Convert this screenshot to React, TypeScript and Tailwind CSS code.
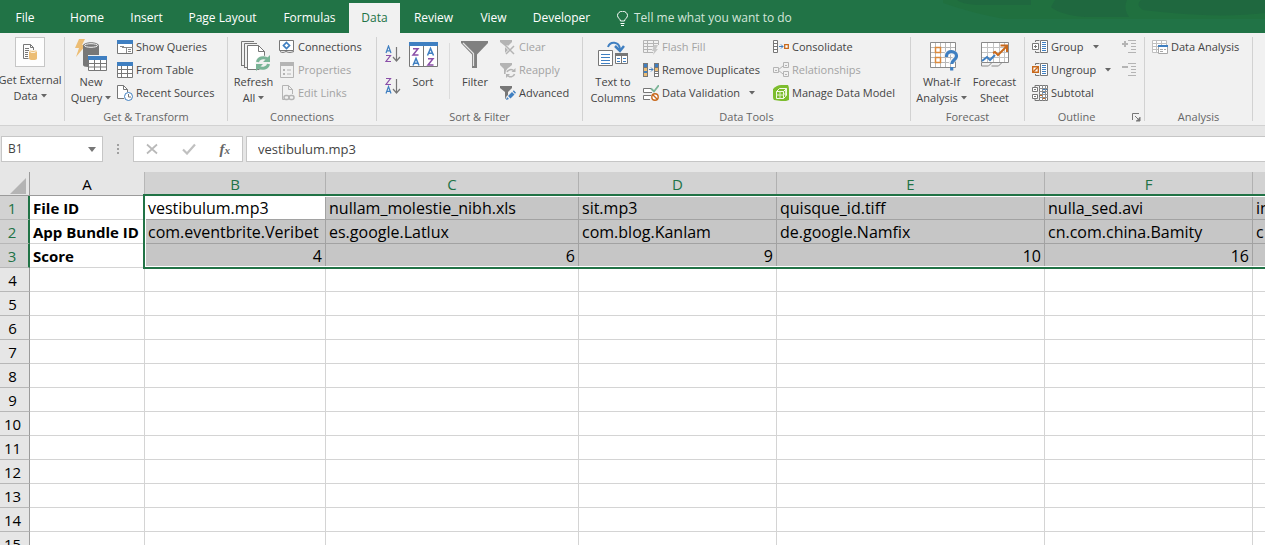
import { ReactNode } from "react";
import clsx from "clsx";

const GRAY = "#777777";
const LIGHT = "#b4b4b4";
const BLUE = "#3f7fc1";
const AMBER = "#ecbd74";
const ORANGE = "#c8691c";
const PURPLE = "#8a4fa8";
const GREEN = "#7ab497";

const tabs = [
  { name: "File", width: "w-[50px] mr-1.5" },
  { name: "Home", width: "w-[62px]" },
  { name: "Insert", width: "w-[57px]" },
  { name: "Page Layout", width: "w-[95px]" },
  { name: "Formulas", width: "w-[79px]" },
  { name: "Data", width: "w-[51px]" },
  { name: "Review", width: "w-[67px]" },
  { name: "View", width: "w-[53px]" },
  { name: "Developer", width: "w-[83px]" },
];

const columns = [
  { name: "A", width: "w-[115px]" },
  { name: "B", width: "w-[181px]" },
  { name: "C", width: "w-[253px]" },
  { name: "D", width: "w-[198px]" },
  { name: "E", width: "w-[268px]" },
  { name: "F", width: "w-[208px]" },
  { name: "G", width: "w-[180px]" },
];

const data = [
  ["File ID", "vestibulum.mp3", "nullam_molestie_nibh.xls", "sit.mp3", "quisque_id.tiff", "nulla_sed.avi", "in"],
  ["App Bundle ID", "com.eventbrite.Veribet", "es.google.Latlux", "com.blog.Kanlam", "de.google.Namfix", "cn.com.china.Bamity", "c"],
  ["Score", "4", "6", "9", "10", "16", ""],
];

const rows = Array.from({ length: 40 }, (_, i) => i + 1);

function Icon({ w = 16, h = 16, children }: { w?: number; h?: number; children: ReactNode }) {
  return (
    <svg width={w} height={h} viewBox={`0 0 ${w} ${h}`} fill="none" className="shrink-0" aria-hidden="true">
      {children}
    </svg>
  );
}

function Caret() {
  return (
    <svg width="6" height="4" viewBox="0 0 6 4" className="inline-block shrink-0" aria-hidden="true">
      <path d="M0 0h6L3 3.5z" fill="#666" />
    </svg>
  );
}

function Separator() {
  return <div className="h-[84px] w-px shrink-0 bg-[#d2d2d2]" />;
}

function Group({ label, width, launcher, children }: { label?: string; width: string; launcher?: boolean; children: ReactNode }) {
  return (
    <section className={clsx("flex h-[88px] shrink-0 flex-col", width)}>
      <div className="flex h-[73px] items-start">{children}</div>
      <div className="flex h-3.5 items-center text-[#666666]">
        <span className="flex-1 text-center">{label}</span>
        {launcher && (
          <button className="flex w-4 justify-end pr-[3px]" aria-label="Outline settings">
            <Icon w={9} h={9}>
              <path d="M.5 7V.5H7M3 3l4 4M8 4v4H4" stroke={GRAY} />
              <path d="M8 4v4H4z" fill={GRAY} />
            </Icon>
          </button>
        )}
      </div>
    </section>
  );
}

function BigButton({ icon, lines, caret, width }: { icon: ReactNode; lines: string[]; caret?: boolean; width: string }) {
  return (
    <button className={clsx("flex shrink-0 flex-col items-center pt-0.5 leading-4 whitespace-nowrap", width)}>
      <span className="mb-[3px]">{icon}</span>
      {lines.map((line, i) => (
        <span key={line} className="flex items-center gap-[3px]">
          {line}
          {caret && i === lines.length - 1 && <Caret />}
        </span>
      ))}
    </button>
  );
}

function SmallButton({ icon, label, caret, disabled }: { icon: ReactNode; label: string; caret?: boolean; disabled?: boolean }) {
  return (
    <button disabled={disabled} className="flex h-[23px] items-center gap-[3px] pb-[3px] whitespace-nowrap disabled:text-[#a3a3a3]">
      {icon}
      {label}
      {caret && (
        <span className="flex pl-1.5">
          <Caret />
        </span>
      )}
    </button>
  );
}

/* ---- large icons ---- */

const ExternalDataIcon = (
  <Icon w={16} h={18}>
    <path d="M1.5 1.5h7l3 3v3M1.5 1.5v14h5" stroke={GRAY} />
    <path d="M8.5 1.5v3h3M3 5.5h4M3 7.5h4M3 9.5h3M3 11.5h3M3 13.5h3" stroke={GRAY} />
    <path d="M7 8.500c0-2 8-2 8 0v7c0 2-8 2-8 0z" fill={AMBER} />
    <ellipse cx="11" cy="8.500" rx="3" ry="1" stroke="#fff" strokeWidth=".8" />
  </Icon>
);

const NewQueryIcon = (
  <Icon w={32} h={32}>
    <path d="M4 0h6L7 6h4L1 18l3-9H0z" fill={AMBER} />
    <path d="M8 7c0-5 16-5 16 0v9H13v12c-3 0-5-1-5-2z" fill={GRAY} />
    <ellipse cx="16" cy="6.500" rx="6.500" ry="1.800" stroke="#f1f1f1" />
    <path d="M13.500 17.500h18v14h-18z" fill="#fff" stroke={GRAY} />
    <path d="M13 17h19v4H13z" fill={BLUE} />
    <path d="M14 24.500h17M14 28h17M19.500 21v10M25.500 21v10" stroke={GRAY} />
  </Icon>
);

const RefreshIcon = (
  <Icon w={32} h={32}>
    <path d="M3.500 27V2.500H16M6.500 29V4.500H19M3.500 26.500h3M6.500 28.500h3" stroke={GRAY} />
    <path d="M9.500 6.500h11l6 6v18h-17z" fill="#fff" stroke={GRAY} />
    <path d="M20.500 6.500v6h6" stroke={GRAY} />
    <circle cx="25" cy="24" r="7.500" fill="#f1f1f1" />
    <path d="M19.500 23a6 5 0 0 1 10-3M30.500 25a6 5 0 0 1-10 3" stroke={GREEN} strokeWidth="3" />
    <path d="M32 16v7h-7zM18 32v-7h7z" fill={GREEN} />
  </Icon>
);

const SortIcon = (
  <Icon w={32} h={32}>
    <path d="M2.500 3.500h28v24h-28z" fill="#fff" stroke={GRAY} />
    <path d="M2 3h29v4H2z" fill={BLUE} />
    <path d="M16.500 7v20" stroke={GRAY} />
    <path d="M6 9.800h5L6 16h5.500M21 19.800h5L21 26h5.500" stroke={PURPLE} strokeWidth="1.500" />
    <path d="M20.500 16.500l3-7 3 7M21.500 14.300h4M6 26.500l3-7 3 7M7 24.300h4" stroke={BLUE} strokeWidth="1.500" />
  </Icon>
);

const FilterIcon = (
  <Icon w={32} h={32}>
    <path d="M2 2h27v2L18 15.500V29h-5V15.500L2 4z" fill="#808080" />
    <path d="M4 4l10.500 10.500V27" stroke="#e4e4e4" strokeWidth="1.200" />
  </Icon>
);

const TextColumnsIcon = (
  <Icon w={32} h={32}>
    <path d="M11 8c2-6 11-6 12 2" stroke={BLUE} strokeWidth="2" />
    <path d="M18 7l5 5 4-5" stroke={BLUE} strokeWidth="2.500" />
    <path d="M1.500 11.500h14v15h-14z" fill="#fff" stroke={GRAY} />
    <path d="M4 15.500h9M4 18.500h9M4 21.500h9M4 24.500h9" stroke={BLUE} />
    <path d="M18.500 14.500h12v10h-12z" fill="#fff" stroke={GRAY} />
    <path d="M18 14h13v3H18z" fill={GRAY} />
    <path d="M24.500 17v8" stroke={GRAY} />
    <path d="M20 19.500h3M20 22.500h3M26 19.500h3M26 22.500h3" stroke={BLUE} />
  </Icon>
);

const WhatIfIcon = (
  <Icon w={32} h={32}>
    <path d="M4.500 3.500h25v25h-25z" fill="#fff" />
    <path d="M4 8.500h26M4 13.500h26M4 18.500h26M4 23.500h26M9.500 3v25M14.500 3v25M19.500 3v25M24.500 3v25" stroke="#b8b8b8" />
    <path d="M4.500 3.500h25v25h-25z" stroke="#8a8a8a" />
    <path d="M9.500 8.500h5v5h-5zM9.500 18.500h5v5h-5z" fill="#fff" stroke="#dd8a3c" strokeWidth="1.500" />
    <path d="M20 18v-1c0-5 10-5 10 0 0 4-5 4-5 8" stroke="#f1f1f1" strokeWidth="5" />
    <path d="M20.500 18v-1c0-6 10-5.500 10 0 0 4-4.800 4-4.800 8M25.700 28v3.500" stroke={BLUE} strokeWidth="3.200" />
  </Icon>
);

const ForecastIcon = (
  <Icon w={32} h={32}>
    <path d="M2.500 3.500h27v20h-27z" fill="#fff" />
    <path d="M2 8.500h27M2 13.500h27M2 18.500h27M8.500 3v20M14.500 3v20M20.500 3v20M25.500 3v20" stroke="#c4c4c4" />
    <path d="M2.500 3.500h27v20h-27z" stroke="#8a8a8a" />
    <path d="M2.500 24v3h7l3-3M12.500 27h7l3-3" stroke="#8a8a8a" />
    <path d="M3 22l5-4 3 3 5-5" stroke={BLUE} strokeWidth="2" />
    <path d="M14 14l2-1 3 3 9-9" stroke={ORANGE} strokeWidth="2" />
    <path d="M21.500 6.500H28V13" stroke={ORANGE} strokeWidth="2" />
  </Icon>
);

/* ---- small icons ---- */

const ShowQueriesIcon = (
  <Icon>
    <path d="M.5 1.500h15v13H.5z" fill="#fff" stroke={GRAY} />
    <path d="M0 1h16v4H0z" fill={BLUE} />
    <path d="M5 8.500h11M9.500 8v6M3 7.500h4M11 10.500h3M11 12.500h3" stroke="#8a8a8a" />
  </Icon>
);

const TableIcon = (
  <Icon>
    <path d="M.5.500h15v15H.5z" fill="#fff" stroke={GRAY} />
    <path d="M0 0h16v4H0z" fill={BLUE} />
    <path d="M0 7.500h16M0 11.500h16M4.500 4v12M10.500 4v12" stroke={GRAY} />
  </Icon>
);

const RecentIcon = (
  <Icon>
    <path d="M7 13.500H.5V.5h6l4 4V7" fill="#fff" stroke={GRAY} />
    <path d="M6.500.500v4h4" stroke={GRAY} />
    <circle cx="11.500" cy="11.500" r="4" fill="#fff" stroke={BLUE} />
    <path d="M11.500 9v3H14" stroke={GRAY} />
  </Icon>
);

const ConnectionsIcon = (
  <Icon>
    <path d="M.5 1.500h14v10H.5z" fill="#fff" stroke={GRAY} />
    <path d="M1 12.500c2 1.500 4 1 6 0 3 1.500 5 1 8 0" stroke={GRAY} />
    <path d="M7.500 3.500l3 3-3 3-3-3z" stroke={BLUE} strokeWidth="1.700" />
  </Icon>
);

const PropertiesIcon = (
  <Icon>
    <path d="M1.500.500h13v15h-13z" stroke={LIGHT} />
    <path d="M1 0h14v4H1z" fill={LIGHT} />
    <path d="M4 7h2v2H4zM4 11h2v2H4z" fill={LIGHT} />
    <path d="M8 8h4M8 12h4" stroke={LIGHT} />
  </Icon>
);

const EditLinksIcon = (
  <Icon>
    <path d="M6 14.500H3.500V.500h6l4 4V9M9.500.500v4h4" stroke={LIGHT} />
    <rect x="5" y="10.500" width="5" height="4" rx="2" stroke={LIGHT} strokeWidth="1.500" />
    <rect x="10" y="10.500" width="5" height="4" rx="2" stroke={LIGHT} strokeWidth="1.500" />
  </Icon>
);

const SortAscIcon = (
  <Icon w={16} h={18}>
    <path d="M1 8l2.500-7L6 8M2 5.800h3" stroke={BLUE} strokeWidth="1.200" />
    <path d="M1 10.500h4.500L1 16.500h5" stroke={PURPLE} strokeWidth="1.200" />
    <path d="M11.500 2v14M8 12l3.500 4 3.500-4" stroke={GRAY} strokeWidth="1.200" />
  </Icon>
);

const SortDescIcon = (
  <Icon w={16} h={18}>
    <path d="M1 1.500h4.500L1 7.500h5" stroke={PURPLE} strokeWidth="1.200" />
    <path d="M1 16.500l2.500-7L6 16.500M2 14.300h3" stroke={BLUE} strokeWidth="1.200" />
    <path d="M11.500 2v14M8 12l3.500 4 3.500-4" stroke={GRAY} strokeWidth="1.200" />
  </Icon>
);

const ClearIcon = (
  <Icon>
    <path d="M0 1h12v2L8 7v7H5V7L0 3z" fill={LIGHT} />
    <path d="M6 7l8 8M14 7l-8 8" stroke="#f1f1f1" strokeWidth="3" />
    <path d="M6 7l8 8M14 7l-8 8" stroke={LIGHT} strokeWidth="1.500" />
  </Icon>
);

const ReapplyIcon = (
  <Icon>
    <path d="M0 1h12v2L7 7v5H4V7L0 3z" fill={LIGHT} />
    <circle cx="10.500" cy="11" r="5" fill="#f1f1f1" />
    <path d="M7 10a4 3.500 0 0 1 7-1M14.500 12a4 3.500 0 0 1-7 1.500" stroke={LIGHT} strokeWidth="1.500" />
    <path d="M15.500 6v4h-4zM6 16v-4h4z" fill={LIGHT} />
  </Icon>
);

const AdvancedIcon = (
  <Icon>
    <path d="M0 1h12v2L8 7v7H5V7L0 3z" fill={GRAY} />
    <path d="M5 16l1-4 7-7 3 3-7 7z" fill="#f1f1f1" />
    <path d="M6 15l1-3 2 2zM8 11l4-4 2.500 2.500-4 4z" fill={BLUE} />
    <path d="M12.800 6.200l1-1 2.200 2.500-1 1z" fill={BLUE} />
  </Icon>
);

const FlashFillIcon = (
  <Icon>
    <path d="M10 13.500H.5v-12h15V6M0 4.500h15M0 7.500h12M0 10.500h9M4.500 1v12M10.500 1v6" stroke={LIGHT} />
    <path d="M11 6h4l-2 4h2l-5 6 1-4H9z" fill="#c6c6c6" />
  </Icon>
);

const DuplicatesIcon = (
  <Icon>
    <path d="M0 1h5v14H0z" fill={GRAY} />
    <path d="M1 2h3v3H1zM1 9h3v2H1z" fill={BLUE} />
    <path d="M1 6h3v3H1zM1 11h3v3H1z" fill={AMBER} />
    <path d="M11 1h5v14h-5z" fill={GRAY} />
    <path d="M12 2h3v3h-3z" fill={BLUE} />
    <path d="M12 6h3v3h-3z" fill={AMBER} />
    <path d="M12 10h3v1h-3zM12 12h3v2h-3z" fill="#fff" />
    <path d="M6 7.500h4M8 5.500l2 2-2 2" stroke={BLUE} />
  </Icon>
);

const ValidationIcon = (
  <Icon>
    <path d="M9 7.500H.5v-4H8M7 14.500H.5v-4H8" fill="#fff" stroke={GRAY} />
    <path d="M8 3.500l3 3L16 0" stroke={GREEN} strokeWidth="1.800" />
    <circle cx="12" cy="12" r="3.200" fill="#fff" stroke={ORANGE} strokeWidth="1.400" />
    <path d="M9.800 9.800l4.400 4.400" stroke={ORANGE} strokeWidth="1.400" />
  </Icon>
);

const ConsolidateIcon = (
  <Icon>
    <path d="M.5 1.500h4v12h-4zM0 4.500h5M0 7.500h5M0 10.500h5" fill="#fff" stroke={GRAY} />
    <path d="M6 7.500h4M8 5.500l2 2-2 2" stroke={BLUE} />
    <path d="M11.700 5.700h3.600v3.600h-3.600z" fill="#fff" stroke={ORANGE} strokeWidth="1.300" />
  </Icon>
);

const RelationshipsIcon = (
  <Icon>
    <path d="M.5 5.500h5v5h-5zM10.500.500h5v5h-5zM10.500 9.500h5v5h-5zM5 8l5-4M5 8l5 4M2 8.500h2M12 3.500h2M12 12.500h2" stroke={LIGHT} />
  </Icon>
);

const ModelIcon = (
  <Icon>
    <path d="M0 4Q4 0 8 0h7q1 2 1 4v11l-3 1H8L1 15Q0 14 0 12z" fill="#7dbd2e" />
    <path d="M3.500 6.500l3-3h7v7l-3 3h-7zM3.500 6.500h7v7M10.500 6.500l3-3" stroke="#f4faea" />
    <path d="M3.500 10h7l3-3M7 6.500v7M12.500 5v7" stroke="#dcefc4" />
  </Icon>
);

// rows of the outline sheet, shared by Group and Ungroup
const OutlineSheet = (
  <>
    <path d="M8.500 1.500h7v12h-7z" fill="#fff" stroke={GRAY} />
    <path d="M10 3.500h4M10 5.500h4M10 7.500h4M10 9.500h4M10 11.500h4" stroke={BLUE} />
    <path d="M3.500 3V1.500h4M3.500 12v1.500h4" stroke={GRAY} />
  </>
);

const GroupIcon = (
  <Icon>
    {OutlineSheet}
    <path d="M.5 4.500h6v6h-6z" fill="#fff" stroke={GRAY} />
    <path d="M2 7.500h3M3.500 6v3" stroke={GRAY} />
  </Icon>
);

const UngroupIcon = (
  <Icon>
    {OutlineSheet}
    <path d="M.7 4.700h5.600v5.600H.7z" fill="#fff" stroke={ORANGE} strokeWidth="1.400" />
    <path d="M1 10l5-5" stroke={ORANGE} strokeWidth="1.400" />
  </Icon>
);

const SubtotalIcon = (
  <Icon>
    <path d="M7.500.500h8v15h-8z" fill="#fff" stroke={GRAY} />
    <path d="M7 3.500h9M7 6.500h9M7 9.500h9M7 12.500h9M10.500 0v16M13.500 0v16" stroke="#8f8f8f" />
    <path d="M11 4.500h2M14 4.500h1M11 7.500h2" stroke={BLUE} />
    <path d="M8 10.500h2M11 13.500h2" stroke={ORANGE} />
    <path d="M.5 2.500h5v4h-5zM.5 9.500h5v4h-5z" fill="#fff" stroke={GRAY} />
    <path d="M2 4.500h2M3 4v1M2 11.500h2M3 11v1M3 2V.5h4M3 14v1.500h4" stroke={GRAY} />
  </Icon>
);

const ShowDetailIcon = (
  <Icon w={15}>
    <path d="M0 5h6M3 2v6" stroke={LIGHT} strokeWidth="2" />
    <path d="M6 1.500h8M9 4.500h5M9 7.500h5M9 10.500h5M6 13.500h8" stroke={LIGHT} />
  </Icon>
);

const HideDetailIcon = (
  <Icon w={15}>
    <path d="M0 5h6" stroke={LIGHT} strokeWidth="2" />
    <path d="M6 1.500h8M9 4.500h5M9 7.500h5M9 10.500h5M6 13.500h8" stroke={LIGHT} />
  </Icon>
);

const AnalysisIcon = (
  <Icon>
    <path d="M.5 1.500h14v12H.5zM0 4.500h15M0 7.500h15M0 10.500h15M4.500 1v12M9.500 1v12" fill="#fff" stroke="#c0c0c0" />
    <path d="M6.500 6.500h9v8h-9z" fill="#fff" stroke="#a8a8a8" />
    <path d="M6 6h10v2H6z" fill={BLUE} />
    <path d="M8 10.500h3M8 12.500h3M12 10.500h2" stroke="#a8a8a8" />
  </Icon>
);

function TitleTabs() {
  return (
    <header className="relative flex h-[33px] shrink-0 items-end overflow-hidden bg-[#217346] text-white">
      <svg width="330" height="20" viewBox="0 0 330 20" className="absolute top-0 right-0" aria-hidden="true">
        <path d="M8 0h322v19H70Q40 14 8 3z" fill="#20703f" />
        <path d="M22 0h74v5H42Q26 4 22 0zM120 0h72q-4 8 2 17h-44q-24-2-34-10zM206 0h124v13q-50 6-122-3-8-5-2-10z" fill="#1f683f" />
      </svg>
      <nav className="relative flex h-[30px]">
        {tabs.map((tab) => (
          <button
            key={tab.name}
            className={clsx(
              "flex shrink-0 items-center justify-center whitespace-nowrap",
              tab.width,
              tab.name === "Data" && "bg-[#f1f1f1] text-[#217346]"
            )}
          >
            {tab.name}
          </button>
        ))}
        <button className="ml-3.5 flex items-center gap-1.5 whitespace-nowrap text-[#d3e6da]">
          <Icon w={11} h={15}>
            <path d="M3.500 10c0-2-3-3-3-5.500a5 4.300 0 0 1 10 0c0 2.500-3 3.500-3 5.500zM3.500 12.500h4M4 14.500h3" stroke="#fff" />
          </Icon>
          Tell me what you want to do
        </button>
      </nav>
    </header>
  );
}

function Ribbon() {
  return (
    <div className="flex h-[93px] shrink-0 items-start overflow-hidden border-b border-[#d2d2d2] bg-[#f1f1f1] pt-1 text-[11px] text-[#444444]">
      <Group width="w-16">
        <button className="flex w-[60px] flex-col items-center leading-4 whitespace-nowrap">
          <span className="mb-[5px] flex size-[30px] items-center justify-center border border-[#c6c6c6] bg-[#fdfdfd]">
            {ExternalDataIcon}
          </span>
          <span>Get External</span>
          <span className="flex items-center gap-[3px]">
            Data
            <Caret />
          </span>
        </button>
      </Group>
      <Separator />
      <Group label="Get & Transform" width="w-[162px]">
        <BigButton icon={NewQueryIcon} lines={["New", "Query"]} caret width="w-[52px]" />
        <div>
          <SmallButton icon={ShowQueriesIcon} label="Show Queries" />
          <SmallButton icon={TableIcon} label="From Table" />
          <SmallButton icon={RecentIcon} label="Recent Sources" />
        </div>
      </Group>
      <Separator />
      <Group label="Connections" width="w-[148px]">
        <BigButton icon={RefreshIcon} lines={["Refresh", "All"]} caret width="w-[51px]" />
        <div>
          <SmallButton icon={ConnectionsIcon} label="Connections" />
          <SmallButton icon={PropertiesIcon} label="Properties" disabled />
          <SmallButton icon={EditLinksIcon} label="Edit Links" disabled />
        </div>
      </Group>
      <Separator />
      <Group label="Sort & Filter" width="w-[205px]">
        <div className="flex flex-col gap-3.5 pt-2 pl-2">
          <button aria-label="Sort A to Z">{SortAscIcon}</button>
          <button aria-label="Sort Z to A">{SortDescIcon}</button>
        </div>
        <BigButton icon={SortIcon} lines={["Sort"]} width="w-11" />
        <div className="mt-1.5 ml-1 h-14 w-px bg-[#dcdcdc]" />
        <BigButton icon={FilterIcon} lines={["Filter"]} width="w-[50px]" />
        <div>
          <SmallButton icon={ClearIcon} label="Clear" disabled />
          <SmallButton icon={ReapplyIcon} label="Reapply" disabled />
          <SmallButton icon={AdvancedIcon} label="Advanced" />
        </div>
      </Group>
      <Separator />
      <Group label="Data Tools" width="w-[327px]">
        <BigButton icon={TextColumnsIcon} lines={["Text to", "Columns"]} width="w-[60px]" />
        <div className="w-[130px]">
          <SmallButton icon={FlashFillIcon} label="Flash Fill" disabled />
          <SmallButton icon={DuplicatesIcon} label="Remove Duplicates" />
          <SmallButton icon={ValidationIcon} label="Data Validation" caret />
        </div>
        <div>
          <SmallButton icon={ConsolidateIcon} label="Consolidate" />
          <SmallButton icon={RelationshipsIcon} label="Relationships" disabled />
          <SmallButton icon={ModelIcon} label="Manage Data Model" />
        </div>
      </Group>
      <Separator />
      <Group label="Forecast" width="w-[113px] px-1">
        <BigButton icon={WhatIfIcon} lines={["What-If", "Analysis"]} caret width="w-[53px]" />
        <BigButton icon={ForecastIcon} lines={["Forecast", "Sheet"]} width="w-[53px]" />
      </Group>
      <Separator />
      <Group label="Outline" width="w-[119px]" launcher>
        <div className="w-[97px] pl-[7px]">
          <SmallButton icon={GroupIcon} label="Group" caret />
          <SmallButton icon={UngroupIcon} label="Ungroup" caret />
          <SmallButton icon={SubtotalIcon} label="Subtotal" />
        </div>
        <div>
          <button aria-label="Show Detail" className="flex h-[23px] items-center pb-[3px]">{ShowDetailIcon}</button>
          <button aria-label="Hide Detail" className="flex h-[23px] items-center pb-[3px]">{HideDetailIcon}</button>
        </div>
      </Group>
      <Separator />
      <Group label="Analysis" width="w-[107px]">
        <div className="pl-[7px]">
          <SmallButton icon={AnalysisIcon} label="Data Analysis" />
        </div>
      </Group>
      <Separator />
    </div>
  );
}

function FormulaBar() {
  return (
    <div className="flex h-[46px] shrink-0 items-start bg-[#e6e6e6] pt-2.5 pl-px text-[13px] text-[#444444]">
      <div className="flex h-[26px] w-[102px] items-center border border-[#c6c6c6] bg-white pr-1.5">
        <input aria-label="Name box" defaultValue="B1" className="w-full min-w-0 pl-1.5 text-xs outline-none" />
        <button aria-label="Open name list" className="flex">
          <svg width="8" height="5" viewBox="0 0 8 5" aria-hidden="true">
            <path d="M0 0h8L4 5z" fill="#777" />
          </svg>
        </button>
      </div>
      <div className="flex h-[26px] w-[30px] flex-col items-center justify-center gap-0.5">
        <span className="size-0.5 bg-[#a0a0a0]" />
        <span className="size-0.5 bg-[#a0a0a0]" />
        <span className="size-0.5 bg-[#a0a0a0]" />
      </div>
      <div className="flex h-[26px] w-[110px] items-center justify-around border border-[#c6c6c6] bg-white">
        <button aria-label="Cancel">
          <Icon w={12} h={12}>
            <path d="M1 1.500l10 9M11 1.500l-10 9" stroke="#b9b9b9" strokeWidth="1.700" />
          </Icon>
        </button>
        <button aria-label="Enter">
          <Icon w={14} h={12}>
            <path d="M1 6.500l4 4 8-9" stroke="#c0c0c0" strokeWidth="2.200" />
          </Icon>
        </button>
        <button aria-label="Insert Function" className="font-['Liberation_Serif',serif] text-[15px] leading-5 font-bold italic text-[#666666]">
          f<span className="text-[11px]">x</span>
        </button>
      </div>
      <input
        aria-label="Formula bar"
        defaultValue="vestibulum.mp3"
        className="ml-[3px] h-[26px] min-w-0 flex-1 border border-r-0 border-[#c6c6c6] bg-white pl-[11px] outline-none"
      />
    </div>
  );
}

function Sheet() {
  return (
    <main className="relative min-h-0 flex-1 overflow-hidden bg-white text-[15px] text-black">
      <table className="w-[1433px] min-w-full table-fixed border-separate border-spacing-0">
        <thead>
          <tr className="h-6">
            <th className="w-[30px] border-r border-b border-[#9b9b9b] bg-[#e6e6e6] p-0" aria-label="Select all">
              <svg width="16" height="16" viewBox="0 0 16 16" className="mt-1 ml-2.5" aria-hidden="true">
                <path d="M16 0v16H0z" fill="#b4b4b4" />
              </svg>
            </th>
            {columns.map((col) => (
              <th
                key={col.name}
                className={clsx(
                  "border-r border-b p-0 leading-[22px] font-normal",
                  col.width,
                  col.name === "A"
                    ? "border-r-[#b7b7b7] border-b-[#9b9b9b] bg-[#e6e6e6]"
                    : "border-r-[#b1b1b1] border-b-[#217346] bg-[#d2d2d2] text-[#217346]"
                )}
              >
                {col.name}
              </th>
            ))}
          </tr>
        </thead>
        <tbody>
          {rows.map((row) => (
            <tr key={row} className="h-6">
              <th
                className={clsx(
                  "border-b border-b-[#b7b7b7] p-0 pr-1 leading-[22px] font-normal",
                  row <= 3
                    ? "border-r-2 border-r-[#217346] bg-[#d2d2d2] text-[#217346]"
                    : "border-r border-r-[#9b9b9b] bg-[#e6e6e6]"
                )}
              >
                {row}
              </th>
              {columns.map((col, c) => {
                const selected = row <= 3 && c > 0;
                return (
                  <td
                    key={col.name}
                    className={clsx(
                      "overflow-hidden border-r border-b p-0 px-[3px] leading-[22px] whitespace-nowrap",
                      selected ? "border-[#a2a2a2]" : "border-[#d4d4d4]",
                      selected && !(row === 1 && c === 1) && "bg-[#c6c6c6]",
                      c === 0 ? "font-bold" : "text-base leading-[22px]",
                      row === 3 && c > 0 && "text-right"
                    )}
                  >
                    {data[row - 1]?.[c]}
                  </td>
                );
              })}
            </tr>
          ))}
        </tbody>
      </table>
      {/* selection outline around B1:G3 */}
      <div className="pointer-events-none absolute top-[22px] right-0 left-[143px] h-[75px] border-2 border-r-0 border-[#217346]">
        <div className="h-full border border-r-0 border-white" />
      </div>
    </main>
  );
}

export default function App() {
  return (
    <div className="flex h-screen flex-col overflow-hidden font-['Open_Sans',sans-serif] text-xs">
      <TitleTabs />
      <Ribbon />
      <FormulaBar />
      <Sheet />
    </div>
  );
}
